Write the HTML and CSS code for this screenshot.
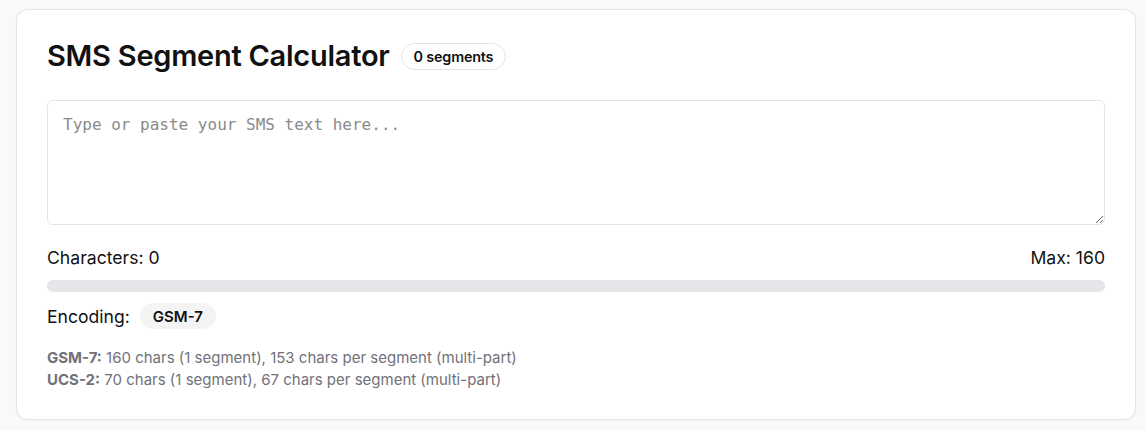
FILE: index.html
```html
<!DOCTYPE html>
<html lang="en">
<head>
<meta charset="utf-8">
<title>SMS Segment Calculator</title>
<link rel="stylesheet" href="styles.css">
</head>
<body>
<div class="card">
  <div class="header">
    <h1 class="title">SMS Segment Calculator</h1>
    <span class="seg-badge">0 segments</span>
  </div>
  <textarea class="sms-input" placeholder="Type or paste your SMS text here..."></textarea>
  <div class="counts">
    <span>Characters: 0</span>
    <span>Max: 160</span>
  </div>
  <div class="progress"><div class="progress-fill" style="width:0%"></div></div>
  <div class="encoding">
    <span>Encoding:</span>
    <span class="enc-badge">GSM-7</span>
  </div>
  <div class="info">
    <div><strong>GSM-7:</strong> 160 chars (1 segment), 153 chars per segment (multi-part)</div>
    <div><strong>UCS-2:</strong> 70 chars (1 segment), 67 chars per segment (multi-part)</div>
  </div>
</div>
</body>
</html>
```
FILE: styles.css
```css
html, body {
  margin: 0;
  background: #f8f9fa;
}
body {
  padding: 9px 10px 10px 16px;
  font-family: Inter, "Noto Sans", sans-serif;
  color: #111111;
}
.card {
  background: #ffffff;
  border: 1px solid #e4e4e7;
  border-radius: 12px;
  box-shadow: 0 1px 2px rgba(0,0,0,0.04);
  padding: 26px 30px 30px 30px;
  height: 411px;
  box-sizing: border-box;
}
.header {
  display: flex;
  align-items: center;
  gap: 11px;
  margin-bottom: 24px;
}
.title {
  margin: 0;
  font-size: 29px;
  font-weight: 600;
  letter-spacing: -0.25px;
  line-height: 40px;
}
.seg-badge {
  display: inline-flex;
  align-items: center;
  height: 25px;
  padding: 0 12px;
  border: 1px solid #e4e4e7;
  border-radius: 999px;
  font-size: 14.4px;
  font-weight: 600;
  letter-spacing: -0.2px;
}
.sms-input {
  display: block;
  width: 100%;
  box-sizing: border-box;
  height: 125px;
  border: 1px solid #e4e4e7;
  border-radius: 6px;
  padding: 14px 15px;
  font-family: "DejaVu Sans Mono", monospace;
  font-size: 16px;
  resize: vertical;
  outline: none;
}
.sms-input::placeholder {
  color: #8a8a8a;
}
.counts {
  display: flex;
  justify-content: space-between;
  font-size: 17.6px;
  margin-top: 22px;
  line-height: 22px;
}
.progress {
  margin-top: 11px;
  height: 12px;
  border-radius: 999px;
  background: #e5e5ea;
  overflow: hidden;
}
.progress-fill {
  height: 100%;
  background: #3b82f6;
}
.encoding {
  display: flex;
  align-items: center;
  gap: 10px;
  margin-top: 11px;
  font-size: 17.6px;
}
.enc-badge {
  display: inline-flex;
  align-items: center;
  height: 26px;
  padding: 0 13px;
  border-radius: 999px;
  background: #f4f4f5;
  font-size: 15px;
  font-weight: 600;
}
.info {
  margin-top: 18px;
  font-size: 15px;
  line-height: 22px;
  color: #71717a;
}
.info strong {
  font-weight: 700;
}
```
